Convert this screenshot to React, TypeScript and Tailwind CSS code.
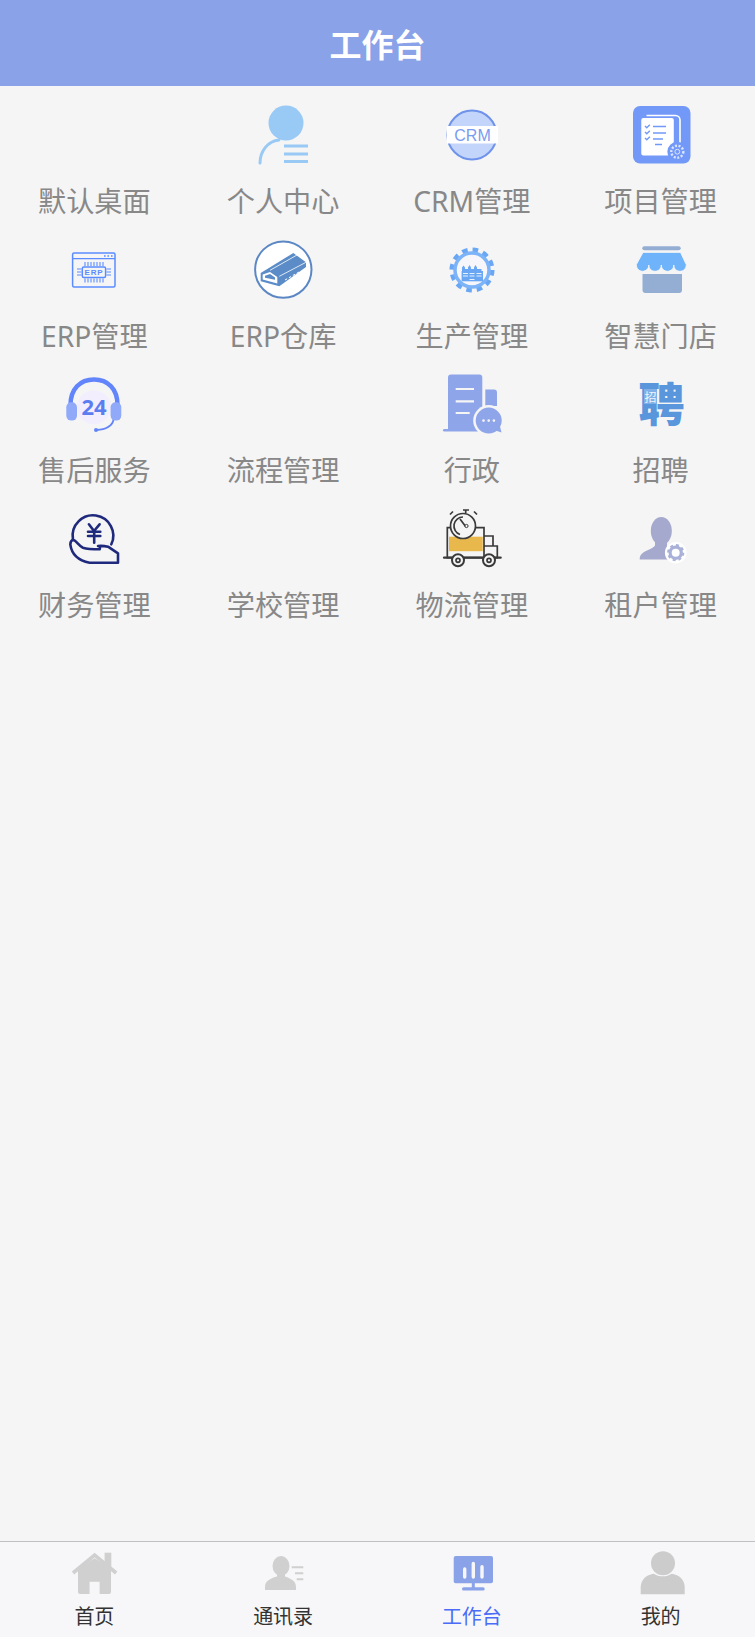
import type { ReactNode } from "react";

const Box = ({ children }: { children?: ReactNode }) => (
  <svg viewBox="0 0 60 60" className="h-[60px] w-[60px] shrink-0 overflow-visible">
    {children}
  </svg>
);

const PersonIcon = () => (
  <Box>
    <circle cx="33" cy="18" r="17.5" fill="#99c9f5" />
    <path d="M7 58c0-12 8-22 19-23" fill="none" stroke="#99c9f5" strokeWidth="3" strokeLinecap="round" />
    <path d="M31 41h24M31 49h24M31 56.5h24" stroke="#99c9f5" strokeWidth="3" />
  </Box>
);

const CrmIcon = () => (
  <Box>
    <circle cx="30" cy="30" r="24.5" fill="#c3d5fb" stroke="#6f93ea" strokeWidth="2" />
    <rect x="5" y="21" width="51" height="17.5" fill="#ffffff" />
    <text x="30.5" y="35.5" textAnchor="middle" fontSize="16" fill="#7a9cf0" fontFamily="Liberation Sans, sans-serif">
      CRM
    </text>
  </Box>
);

const ProjectIcon = () => (
  <Box>
    <rect x="2" y="1" width="57.5" height="57.5" rx="7" fill="#7299f8" />
    <path d="M15.5 10.5h29a4.5 4.5 0 0 1 4.5 4.5v26" fill="none" stroke="#ffffff" strokeWidth="1.6" />
    <rect x="10.3" y="13" width="32.5" height="37.5" rx="2" fill="#ffffff" />
    <path d="M14 21l1.8 1.8 3-3M14 27l1.8 1.8 3-3M14 33l1.8 1.8 3-3" fill="none" stroke="#7299f8" strokeWidth="1.4" />
    <path d="M22 21.5h13M22 28h13M22 34h10M24 39.5h7" stroke="#7299f8" strokeWidth="1.7" />
    <circle cx="46.3" cy="46.7" r="10" fill="#7299f8" />
    <circle cx="46.3" cy="46.7" r="6" fill="none" stroke="#dbe5ff" strokeWidth="2.4" strokeDasharray="2 1.6" />
    <circle cx="46.3" cy="46.7" r="2.4" fill="none" stroke="#dbe5ff" strokeWidth="1" />
  </Box>
);

const ErpIcon = () => (
  <Box>
    <rect x="8.6" y="13" width="42.4" height="34" rx="1.5" fill="none" stroke="#5b8cff" strokeWidth="1.5" />
    <path d="M8.6 18.6h42.4" stroke="#5b8cff" strokeWidth="1.4" />
    <path d="M40 16h1.6M43.4 16H45M47 16h1.6" stroke="#5b8cff" strokeWidth="1.6" />
    <rect x="18.3" y="27" width="23.3" height="10.5" rx="1.5" fill="#f5f5f5" stroke="#5b8cff" strokeWidth="1.5" />
    <path
      d="M21 22v4M24 22v4M27 22v4M30 22v4M33 22v4M36 22v4M39 22v4M21 38.5v4M24 38.5v4M27 38.5v4M30 38.5v4M33 38.5v4M36 38.5v4M39 38.5v4M13 29h4.5M13 32h4.5M13 35h4.5M42.5 29H47M42.5 32H47M42.5 35H47"
      stroke="#5b8cff"
      strokeWidth="1.1"
    />
    <text x="30" y="35.3" textAnchor="middle" fontSize="8" fontWeight="700" letterSpacing="0.8" fill="#5b8cff" fontFamily="Liberation Sans, sans-serif">
      ERP
    </text>
  </Box>
);

const WarehouseIcon = () => (
  <Box>
    <circle cx="30.3" cy="29.6" r="28.2" fill="#ffffff" stroke="#5b87c5" strokeWidth="2" />
    <path d="M7.7 33L40.3 13 53 22.3V27L26.3 46.3 7.7 41.3z" fill="#5b8cc8" />
    <path d="M9.7 34.6L17 32l7.3 5v6.6L9.7 39.6z" fill="#ffffff" />
    <path d="M12 35.8l5-1.8 5 3.6v2.2L12 37.8z" fill="#5b8cc8" />
    <path d="M17 30.3L44 15M26.3 36.3L53 22.3" stroke="#ffffff" strokeWidth="0.8" />
    <path d="M32 40l14-8" stroke="#ffffff" strokeWidth="1" strokeDasharray="2.5 2" />
  </Box>
);

const FactoryGearIcon = () => (
  <Box>
    <circle cx="30" cy="30" r="20" fill="none" stroke="#69a7f5" strokeWidth="5" strokeDasharray="5.5 4.97" />
    <circle cx="30" cy="30" r="17" fill="#f7f7fb" stroke="#7db3f7" strokeWidth="3.5" />
    <path d="M20 31v-3.500l1.500-2 1.500 2V29h3v-1.500l1.500-2.500 1.500 2.500V29h3v-1.500l1.500-2.500 1.500 2.500V29h4.500v2z" fill="#69a7f5" />
    <rect x="19.600" y="31" width="21.400" height="10.300" fill="#69a7f5" />
    <path d="M21 33.500h5M21 36h5M27.500 33.500h5M27.500 36h5M34.500 33.500h5M34.500 36h5M27.500 39.500h5" stroke="#e8f1fe" strokeWidth="1.200" />
  </Box>
);

const StoreIcon = () => (
  <Box>
    <rect x="11.300" y="6.300" width="38.400" height="4" rx="2" fill="#94add3" />
    <path d="M11.500 34h39.500v16a3 3 0 0 1-3 3H14.500a3 3 0 0 1-3-3z" fill="#94add3" />
    <path
      d="M12 12.300h37.500l5.800 12.300c0 4-2.800 6.700-6.300 6.700s-6.200-2.700-6.200-6.200c0 3.500-2.700 6.200-6.300 6.200s-6.200-2.700-6.200-6.200c0 3.500-2.800 6.200-6.300 6.200s-6.200-2.700-6.200-6.200c0 3.500-2.800 6.200-6.200 6.200S5.300 28.600 5.300 24.600z"
      fill="#6fb3fb"
      stroke="#f5f5f5"
      strokeWidth="1"
    />
  </Box>
);

const HeadsetIcon = () => (
  <Box>
    <circle cx="30" cy="33.300" r="17" fill="#f3eefe" />
    <path d="M6.500 31C6.500 15 16 5.500 30 5.500S53.500 15 53.500 31" fill="none" stroke="#6385fb" strokeWidth="4.500" />
    <rect x="2.300" y="28.300" width="10.700" height="18.300" rx="5" fill="#90aaf9" />
    <rect x="46.600" y="28.300" width="10.700" height="18.300" rx="5" fill="#90aaf9" />
    <path d="M49.500 46c-1.500 6-8 9.500-17 10" fill="none" stroke="#6385fb" strokeWidth="1.800" />
    <circle cx="32" cy="56" r="2" fill="#6385fb" />
    <text x="30" y="41" textAnchor="middle" fontSize="22" fontWeight="700" fill="#5b7df0" fontFamily="Noto Sans, sans-serif">
      24
    </text>
  </Box>
);

const AdminIcon = () => (
  <Box>
    <path d="M6 3.600a3 3 0 0 1 3-3h28.300a3 3 0 0 1 3 3V56H6z" fill="#8ea5ea" />
    <path d="M43.300 15.600h8.700a3 3 0 0 1 3 3V32H43.300z" fill="#8ea5ea" />
    <rect x="1" y="55" width="40" height="2.400" rx="1.200" fill="#8ea5ea" />
    <path d="M13.700 15h18.300M13.700 27.300h18.300M13.700 39h14" stroke="#f5f5f5" strokeWidth="2.200" />
    <circle cx="46.700" cy="46.600" r="15.500" fill="#f5f5f5" />
    <circle cx="46.700" cy="46.600" r="13" fill="#8ea5ea" />
    <path d="M52 56l7.500 2.500-2-8z" fill="#8ea5ea" />
    <circle cx="41.500" cy="46.600" r="1.300" fill="#f5f5f5" />
    <circle cx="46.700" cy="46.600" r="1.300" fill="#f5f5f5" />
    <circle cx="51.900" cy="46.600" r="1.300" fill="#f5f5f5" />
  </Box>
);

const HireIcon = () => (
  <Box>
    <text x="30.500" y="47" textAnchor="middle" fontSize="46" fontWeight="900" fill="#5a96dc" fontFamily="Noto Sans CJK SC, sans-serif">
      聘
    </text>
    <rect x="13" y="15" width="13" height="15" fill="#7fb0e8" />
    <text x="19.500" y="28" textAnchor="middle" fontSize="12" fill="#eef5fc" fontFamily="Noto Sans CJK SC, sans-serif">
      招
    </text>
  </Box>
);

const FinanceIcon = () => (
  <Box>
    <g fill="none" stroke="#1f2a7c" strokeWidth="2.600" strokeLinejoin="round" strokeLinecap="round">
      <path d="M8.900 29.700A20.300 20.300 0 1 1 47.300 35.300" />
      <path d="M24.900 15.300L30 22l5.600-6.700M24 22.700h12.300M24 27h12.300M30.200 22v11.700" />
      <path d="M6.300 35.300c.2-2.800 1.200-4.300 3-4.300 3 .5 5.500 6 9.600 7.700 5 1.600 11 1.600 16.700 1.600 1-2 0-3.300-1.600-3.300 3.500-.3 7 0 10 .7l10 6.600v9.400H25.600C17 52 8 48 6.300 35.300z" />
    </g>
  </Box>
);

const TruckIcon = () => (
  <Box>
    <rect x="7" y="27.700" width="33.700" height="14.500" fill="#e8b84d" />
    <g fill="none" stroke="#3a3a3a" strokeWidth="1.700">
      <path d="M11 18.700H5.300v30H42v-30h-8" />
      <path d="M42 27h9v10M42 37h13.300v11.700H42" />
      <path d="M2 48.700h56.700" strokeWidth="2.200" strokeLinecap="round" />
      <circle cx="21" cy="17" r="12.500" fill="#f5f5f5" />
      <path d="M21 8a9 9 0 0 0-3 17.500" />
      <path d="M18 10l6 8" />
      <path d="M21 1h6M23.700 1v3M11 2.500l-3 3M32 2.500l3 3" />
      <circle cx="16" cy="51.300" r="6" fill="#f5f5f5" strokeWidth="2" />
      <circle cx="16" cy="51.300" r="2" />
      <circle cx="47" cy="51.300" r="6" fill="#f5f5f5" strokeWidth="2" />
      <circle cx="47" cy="51.300" r="2" />
    </g>
    <circle cx="24.500" cy="17" r="1.600" fill="#f5f5f5" stroke="#3a3a3a" strokeWidth="1" />
  </Box>
);

const TenantIcon = () => (
  <Box>
    <ellipse cx="30.300" cy="22" rx="10.500" ry="14" fill="#a5a9cd" />
    <path d="M24 32h12v5c5 2.500 12 4 16 7v6.500H8.700c0-5 3-7 7.300-9 4-2 7-3 8-5z" fill="#a5a9cd" />
    <circle cx="44.700" cy="43.700" r="10.800" fill="#ffffff" />
    <circle cx="44.700" cy="43.700" r="5.600" fill="none" stroke="#a9b1d8" strokeWidth="3.200" />
    <circle cx="44.700" cy="43.700" r="7.600" fill="none" stroke="#a9b1d8" strokeWidth="2" strokeDasharray="3 2.970" />
  </Box>
);

const TabBox = ({ children }: { children: ReactNode }) => (
  <svg viewBox="0 0 48 48" className="h-12 w-12 shrink-0">
    {children}
  </svg>
);

const HomeTabIcon = () => (
  <TabBox>
    <path d="M34.600 3.700h6.700v14h-6.700z" fill="#d0d0d0" />
    <path d="M8 19.500L24.600 9.300 41 19.500V43a2 2 0 0 1-2 2h-9.400V32.700h-10V45H10a2 2 0 0 1-2-2z" fill="#d0d0d0" />
    <path d="M3 24L24.600 6l21.600 18" fill="none" stroke="#d0d0d0" strokeWidth="3.600" />
  </TabBox>
);

const ContactsTabIcon = () => (
  <TabBox>
    <ellipse cx="22" cy="17" rx="8.500" ry="10" fill="#d0d0d0" />
    <path d="M18 24h8v3.500c4 1.500 11 3.500 11 10.500v3H6v-3c0-7 7-9 12-10.500z" fill="#d0d0d0" />
    <path d="M32.700 18.300h11.600M36 24.300h8.300M37.700 30.300h6.600" stroke="#d0d0d0" strokeWidth="2" />
  </TabBox>
);

const WorkbenchTabIcon = () => (
  <TabBox>
    <rect x="5.700" y="7" width="39.300" height="27.300" rx="2" fill="#8aa2e8" />
    <path d="M25.300 34v5" stroke="#8aa2e8" strokeWidth="3" />
    <rect x="14" y="38.300" width="22.700" height="3.200" rx="1.600" fill="#8aa2e8" />
    <path d="M16.700 20v8M25.300 14.500V28M34 17.800V28" stroke="#f7f7f9" strokeWidth="3.400" strokeLinecap="round" />
  </TabBox>
);

const MineTabIcon = () => (
  <TabBox>
    <path d="M3.700 45.300V38c0-8 7-12.700 13-13.300 5 3.400 13 3.400 18 0 6 .6 13 5.300 13 13.300v7.300z" fill="#cccccc" />
    <circle cx="26" cy="14.300" r="12" fill="#cccccc" />
  </TabBox>
);

const apps: { label: string; icon?: ReactNode }[] = [
  { label: "默认桌面" },
  { label: "个人中心", icon: <PersonIcon /> },
  { label: "CRM管理", icon: <CrmIcon /> },
  { label: "项目管理", icon: <ProjectIcon /> },
  { label: "ERP管理", icon: <ErpIcon /> },
  { label: "ERP仓库", icon: <WarehouseIcon /> },
  { label: "生产管理", icon: <FactoryGearIcon /> },
  { label: "智慧门店", icon: <StoreIcon /> },
  { label: "售后服务", icon: <HeadsetIcon /> },
  { label: "流程管理" },
  { label: "行政", icon: <AdminIcon /> },
  { label: "招聘", icon: <HireIcon /> },
  { label: "财务管理", icon: <FinanceIcon /> },
  { label: "学校管理" },
  { label: "物流管理", icon: <TruckIcon /> },
  { label: "租户管理", icon: <TenantIcon /> },
];

const tabs = [
  { label: "首页", icon: <HomeTabIcon /> },
  { label: "通讯录", icon: <ContactsTabIcon /> },
  { label: "工作台", icon: <WorkbenchTabIcon />, active: true },
  { label: "我的", icon: <MineTabIcon /> },
];

export default function App() {
  return (
    <div className="flex h-[1637px] w-full flex-col bg-[#f5f5f5] font-['Noto_Sans','Noto_Sans_CJK_SC',sans-serif]">
      <header className="flex h-[86px] shrink-0 items-center justify-center bg-[#8aa2e8] pt-[3px]">
        <h1 className="text-[32px] font-bold text-white">工作台</h1>
      </header>

      <main className="grid flex-1 auto-rows-[134.7px] grid-cols-4 content-start">
        {apps.map((app) => (
          <div key={app.label} className="flex flex-col items-center pt-[19px]">
            {app.icon ?? <div className="h-[60px] w-[60px] shrink-0" />}
            <span className="mt-[18px] text-[28.2px] leading-[37px] text-[#888888]">{app.label}</span>
          </div>
        ))}
      </main>

      <nav className="grid h-[96px] shrink-0 grid-cols-4 border-t border-[#c0c0c4] bg-[#f7f7f9]">
        {tabs.map((tab) => (
          <div key={tab.label} className="flex flex-col items-center pt-[7px]">
            {tab.icon}
            <span className={`mt-[6px] text-[20px] leading-7 ${tab.active ? "text-[#4a6cf7]" : "text-[#333333]"}`}>
              {tab.label}
            </span>
          </div>
        ))}
      </nav>
    </div>
  );
}
